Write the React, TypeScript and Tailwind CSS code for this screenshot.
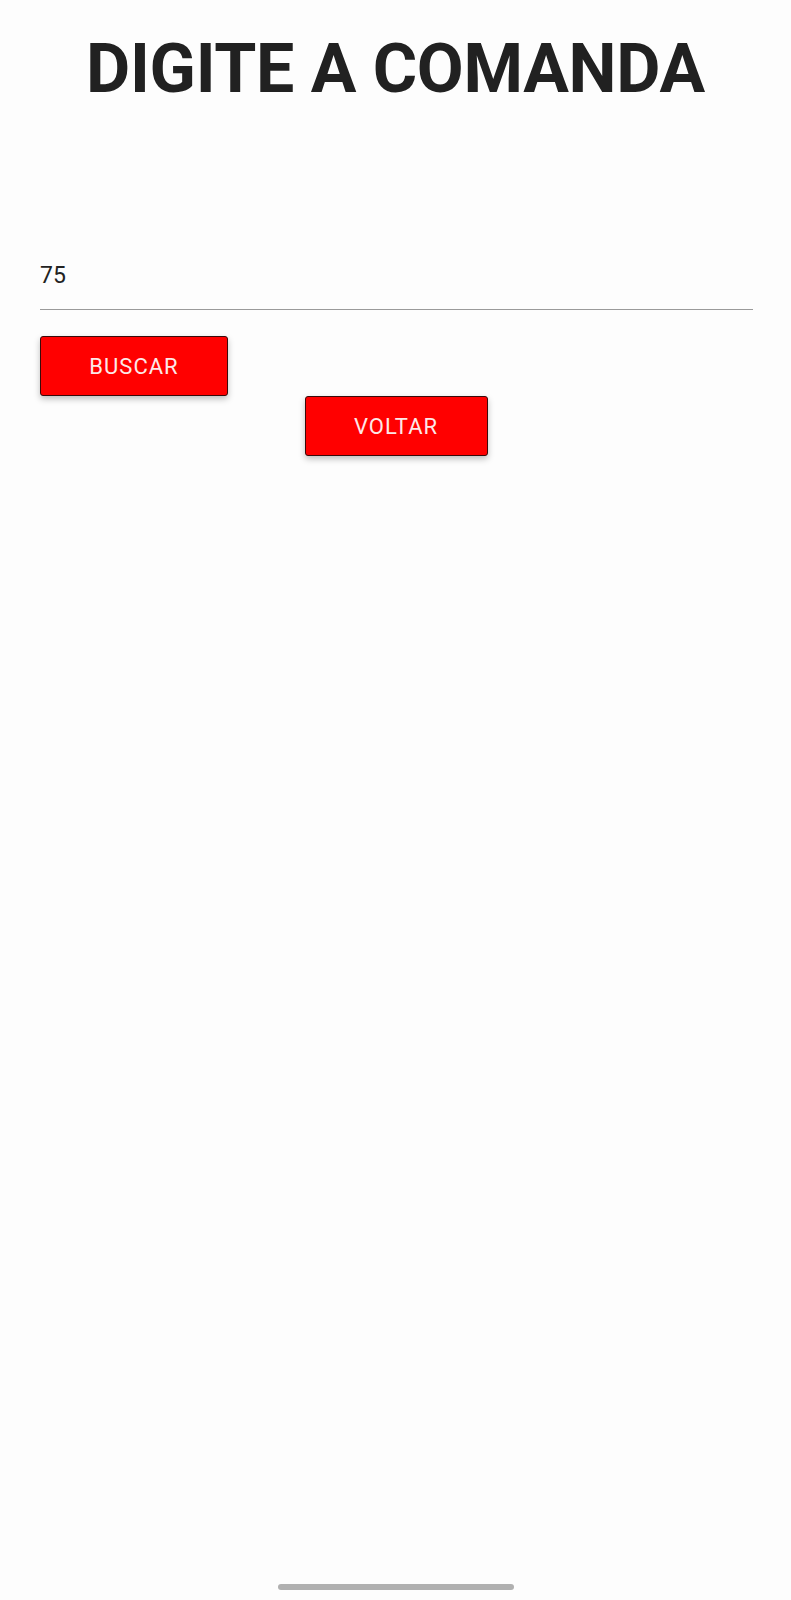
import React from "react";

export default function App() {
  return (
    <div
      className="flex h-[1600px] w-full flex-col bg-[#fdfdfd]"
      style={{ fontFamily: "Roboto, 'Noto Sans', sans-serif" }}
    >
      <h1 className="mt-[31px] text-center text-[68px] font-bold leading-[76px] tracking-[-0.3px] text-[#212121]">
        DIGITE A COMANDA
      </h1>
      <div className="mt-[154px] px-[40px] pr-[38px]">
        <div className="border-b-[1.5px] border-[#9a9a9a] pb-[18px] text-[23px] leading-[30px] text-[#222]">
          75
        </div>
      </div>
      <div className="mt-[26px] px-[40px]">
        <button className="flex h-[60px] w-[188px] items-center justify-center rounded-[3px] border border-[#3a0a0a] bg-[#ff0000] text-[22px] tracking-[1px] text-[#fde8e8] shadow-[0_3px_6px_rgba(0,0,0,0.25)]">
          BUSCAR
        </button>
      </div>
      <div className="flex justify-center">
        <button className="ml-[1px] flex h-[60px] w-[183px] items-center justify-center rounded-[3px] border border-[#3a0a0a] bg-[#ff0000] text-[22px] tracking-[1px] text-[#fde8e8] shadow-[0_3px_6px_rgba(0,0,0,0.25)]">
          VOLTAR
        </button>
      </div>
      <div className="mt-auto mb-[10px] flex justify-center">
        <div className="h-[6px] w-[236px] rounded-full bg-[#b0b0b0]" />
      </div>
    </div>
  );
}
